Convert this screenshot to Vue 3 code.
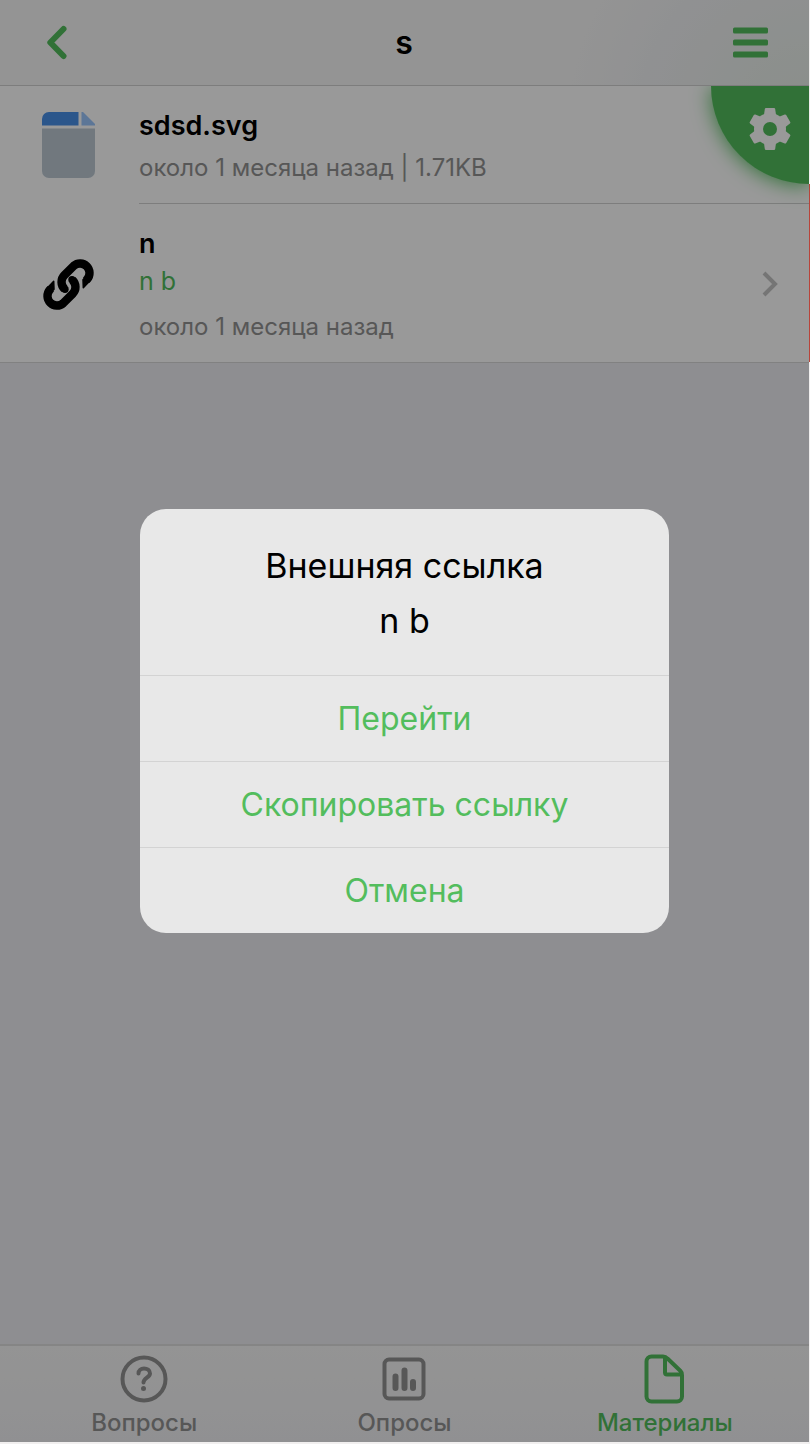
<script setup>
import { ref } from 'vue'

const open = ref(true)
</script>

<template>
  <div class="page">
    <div class="app">
      <header class="bar">
        <button class="icon-btn back" aria-label="Назад">
          <svg width="30" height="36" viewBox="-5 0 30 36"><path d="M18.500 4 5.300 17.500 18.500 31" fill="none" stroke="currentColor" stroke-width="6" stroke-linecap="round" stroke-linejoin="round" /></svg>
        </button>
        <h1>s</h1>
        <button class="icon-btn menu" aria-label="Меню">
          <svg width="35" height="32" viewBox="0 0 35 32" fill="currentColor"><rect y="0.500" width="35" height="6" rx="1.500" /><rect y="12.500" width="35" height="6" rx="1.500" /><rect y="24.500" width="35" height="6" rx="1.500" /></svg>
        </button>
      </header>

      <main>
        <ul class="list">
          <li class="row file">
            <svg class="thumb" width="53" height="66" viewBox="0 0 53 66">
              <path d="M7 0h29.500v13.500H0V7a7 7 0 0 1 7-7z" fill="#488fe8" />
              <path d="M39.500 0H41l12 12v1.500H39.500z" fill="#9ac5fc" />
              <path d="M0 16.500h53V59a7 7 0 0 1-7 7H7a7 7 0 0 1-7-7z" fill="#bcc8d3" />
            </svg>
            <div class="info">
              <h2>sdsd.svg</h2>
              <p class="meta">около 1 месяца назад | 1.71KB</p>
            </div>
          </li>
          <li class="row link">
            <svg class="thumb" width="53" height="51" viewBox="-1 0 53 51">
              <g id="chain-half" stroke="#000">
                <path d="M21.500 29.900A9.500 9.500 0 0 1 21.300 16.300L30.800 6.800A9.500 9.500 0 0 1 44.200 20.200L43 21.400" fill="none" stroke-width="8.400" stroke-linecap="butt" />
                <circle cx="22" cy="30.300" r="3.700" stroke="none" />
                <path d="M41.800 18.600 46 22.800 40.300 28.800 40 20.800z" stroke-width="1.500" stroke-linejoin="round" />
              </g>
              <use href="#chain-half" transform="rotate(180 25.500 25.500)" />
            </svg>
            <div class="info">
              <h2>n</h2>
              <a href="#">n b</a>
              <p class="meta">около 1 месяца назад</p>
            </div>
            <svg class="chevron" width="16" height="26" viewBox="0 0 16 26"><path d="m2 2 11 11L2 24" fill="none" stroke="#c3c3c3" stroke-width="4" /></svg>
          </li>
        </ul>
        <button class="settings" aria-label="Настройки">
          <svg width="42" height="42" viewBox="-21 -21 42 42" fill="#fff">
            <path id="teeth" d="M-4-21H4Q5-21 5.200-20L6-14V14L5.200 20Q5 21 4 21H-4Q-5 21-5.200 20L-6 14V-14L-5.200-20Q-5-21-4-21z" />
            <use href="#teeth" transform="rotate(60)" />
            <use href="#teeth" transform="rotate(120)" />
            <circle r="16" />
            <circle r="7" fill="#53bd5d" />
          </svg>
        </button>
      </main>

      <nav class="tabs">
        <a href="#">
          <svg width="48" height="50" viewBox="0 0 48 50" fill="none" stroke="currentColor"><circle cx="24" cy="25" r="21.500" stroke-width="4" /><path d="M18.500 19.500c0-3.500 2.500-5 5.500-5s6 1.500 6 5c0 4-6.500 4.500-6.500 9" stroke-width="4" stroke-linecap="round" /><circle cx="23.500" cy="34.500" r="2.500" fill="currentColor" stroke="none" /></svg>
          <span>Вопросы</span>
        </a>
        <a href="#">
          <svg width="48" height="50" viewBox="0 0 48 50" fill="none" stroke="currentColor"><rect x="4.500" y="5.500" width="39" height="39" rx="4.500" stroke-width="4" /><path d="M15.500 22.500v11.500M24.500 16.500v17.500M33 28v6" stroke-width="6" stroke-linecap="round" /></svg>
          <span>Опросы</span>
        </a>
        <a href="#" class="active">
          <svg width="48" height="50" viewBox="0 0 48 50" fill="none" stroke="currentColor" stroke-width="4" stroke-linejoin="round"><path d="M24 3.500V18.500a2 2 0 0 0 2 2H41.500M10.500 2.500H22a6 6 0 0 1 4.500 2L39.500 17a5 5 0 0 1 1.500 4V42.500a5 5 0 0 1-5 5H10.500a5 5 0 0 1-5-5V7.500a5 5 0 0 1 5-5z" /></svg>
          <span>Материалы</span>
        </a>
      </nav>

      <div v-if="open" class="backdrop">
        <div class="dialog" role="dialog" aria-modal="true" aria-labelledby="dialog-title">
          <div class="message">
            <h2 id="dialog-title">Внешняя ссылка</h2>
            <p>n b</p>
          </div>
          <button @click="open = false">Перейти</button>
          <button @click="open = false">Скопировать ссылку</button>
          <button @click="open = false">Отмена</button>
        </div>
      </div>
    </div>
  </div>
</template>

<style>
body {
  background: #f1efef;
}
</style>

<style scoped>
* {
  box-sizing: border-box;
}
.page {
  min-height: 100vh;
  display: flex;
  padding: 0 1px 2px 0;
  font-family: Inter, "Liberation Sans", sans-serif;
  color: #000;
}
.app {
  position: relative;
  flex: 1;
  display: flex;
  flex-direction: column;
  background: #ededf2;
}
h1,
h2,
p,
ul {
  margin: 0;
  padding: 0;
}
button {
  border: 0;
  padding: 0;
  background: none;
  font: inherit;
  cursor: pointer;
}
a {
  color: #53bd5d;
  text-decoration: none;
}
.bar {
  position: relative;
  z-index: 1;
  height: 86px;
  display: grid;
  grid-template-columns: 1fr auto 1fr;
  align-items: center;
  padding: 0 41px 0 40px;
  border-bottom: 1px solid #d0d0d0;
  background: radial-gradient(circle at 100% 140%, #e6eee7, #f1f2f4 170px, #f7f7f7 240px);
}
.bar h1 {
  font-size: 32px;
  line-height: 36px;
  font-weight: 600;
}
.icon-btn {
  display: flex;
  color: #53bd5d;
}
.menu {
  justify-self: end;
}
main {
  position: relative;
  flex: 1;
}
.list {
  position: relative;
  list-style: none;
  background: #fff;
  border-bottom: 1px solid #d8d8d8;
}
.list::after {
  content: "";
  position: absolute;
  top: 98px;
  right: -1px;
  bottom: 0;
  width: 1px;
  background: #b8443a;
}
.row {
  display: grid;
  grid-template-columns: 97px 1fr;
  padding-left: 42px;
  align-items: center;
}
.link {
  grid-template-columns: 97px 1fr auto;
  padding-right: 31px;
}
.file .info {
  border-bottom: 1px solid #d0d0d0;
  padding: 23px 0 20px;
}
.link .info {
  padding: 23px 0 20px;
}
.link .thumb {
  margin-top: 3px;
}
.link .chevron {
  margin-top: 2px;
}
.info h2 {
  font-size: 27px;
  line-height: 34px;
  font-weight: 600;
}
.info a {
  display: block;
  font-size: 25px;
  line-height: 41px;
}
.meta {
  padding-top: 10px;
  font-size: 24px;
  line-height: 30px;
  color: #929292;
}
.settings {
  position: absolute;
  top: 0;
  right: 0;
  width: 98px;
  height: 98px;
  display: flex;
  align-items: center;
  justify-content: center;
  padding: 0 0 12px 20px;
  border-bottom-left-radius: 100%;
  background: #53bd5d;
  box-shadow: 0 2px 20px #53bd5d;
  clip-path: inset(0 0 -40px -40px);
}
.tabs {
  height: 98px;
  display: grid;
  grid-template-columns: repeat(3, 1fr);
  padding: 0 14px;
  border-top: 2px solid #dedede;
  background: linear-gradient(#f7f7f7, #f1f1f4);
}
.tabs a {
  display: flex;
  flex-direction: column;
  align-items: center;
  padding-top: 8px;
  gap: 6px;
  font-size: 24px;
  line-height: 26px;
  font-weight: 500;
  color: #929292;
}
.tabs a.active {
  color: #53bd5d;
}
.backdrop {
  position: absolute;
  z-index: 2;
  inset: 0;
  display: flex;
  align-items: center;
  justify-content: center;
  background: rgba(0, 0, 0, 0.4);
}
.dialog {
  width: 66%;
  max-width: 529px;
  border-radius: 26px;
  overflow: hidden;
  background: #e8e8e8;
  text-align: center;
}
.message {
  padding: 29px 20px 27px;
}
.message h2,
.message p {
  font-size: 34px;
  line-height: 55px;
  font-weight: 400;
}
.dialog button {
  display: block;
  width: 100%;
  border-top: 1px solid #d3d3d3;
  font-size: 32px;
  line-height: 85px;
  color: #53bd5d;
}
</style>
